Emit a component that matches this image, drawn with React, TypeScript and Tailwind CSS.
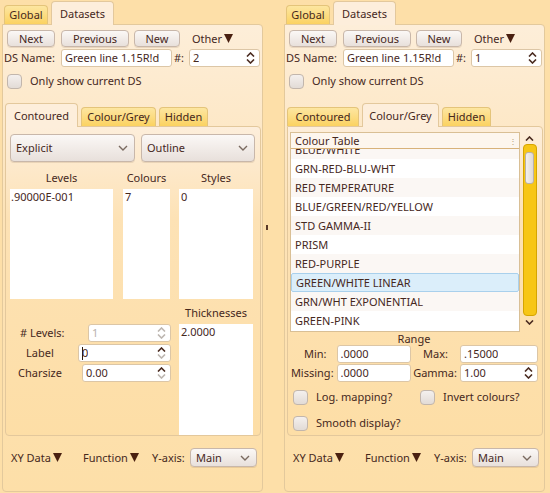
import React from 'react';

const ink = 'text-[#46281d]';

function Tri() {
  return (
    <svg width="9" height="9" viewBox="0 0 9 9" className="ml-[2px] inline-block">
      <polygon points="0,0 9,0 4.5,9" fill="#4a2010" />
    </svg>
  );
}

function Chevron({ up = false, grey = false }: { up?: boolean; grey?: boolean }) {
  return (
    <svg width="9" height="5" viewBox="0 0 9 5">
      <polyline
        points={up ? '1,4.5 4.5,1 8,4.5' : '1,0.5 4.5,4 8,0.5'}
        fill="none"
        stroke={grey ? '#bdb6b0' : '#4a2b20'}
        strokeWidth="1.6"
      />
    </svg>
  );
}

function Spin({ upGrey = false, downGrey = false }: { upGrey?: boolean; downGrey?: boolean }) {
  return (
    <div className="flex flex-col gap-[2px] pr-[4px]">
      <Chevron up grey={upGrey} />
      <Chevron grey={downGrey} />
    </div>
  );
}

function Button({ label, w }: { label: string; w: string }) {
  return (
    <div
      className={`${w} h-[17px] flex items-center justify-center rounded-[4px] border border-[#c8b7aa] bg-gradient-to-b from-[#fbf8f6] to-[#e8e0db] shadow-[0_1px_0_rgba(120,90,60,0.15)]`}
    >
      {label}
    </div>
  );
}

function Combo({ label, w, h }: { label: string; w: string; h: string }) {
  return (
    <div
      className={`${w} ${h} flex items-center justify-between pl-[5px] pr-[6px] rounded-[4px] border border-[#c8b7aa] bg-gradient-to-b from-[#fbf8f6] to-[#e8e0db] shadow-[0_1px_0_rgba(120,90,60,0.15)]`}
    >
      <span>{label}</span>
      <svg width="10" height="6" viewBox="0 0 10 6">
        <polyline points="1,1 5,5 9,1" fill="none" stroke="#7a6a60" strokeWidth="1.4" />
      </svg>
    </div>
  );
}

function Input({ value, w, spin, grey = false, cursor = false }: { value: string; w: string; spin?: React.ReactNode; grey?: boolean; cursor?: boolean }) {
  return (
    <div className={`${w} h-[18px] shrink-0 flex items-center justify-between rounded-[3px] border border-[#dcc6a6] bg-white pl-[3px]`}>
      <span className={`whitespace-nowrap overflow-hidden flex items-center ${grey ? 'text-[#b9b2ac]' : ''}`}>
        {cursor && <span className="w-px h-[13px] bg-[#2a1a10] mr-[-1px]" />}
        {value}
      </span>
      {spin}
    </div>
  );
}

function Check({ label, className = '' }: { label: string; className?: string }) {
  return (
    <div className={`flex items-center gap-[8px] ${className}`}>
      <div className="w-[15px] h-[15px] rounded-[4px] border border-[#c2b6ac] bg-gradient-to-b from-[#f4f0ee] to-[#e2dbd6]" />
      <span>{label}</span>
    </div>
  );
}

function Tab({ label, active, w }: { label: string; active: boolean; w: string }) {
  return active ? (
    <div className={`${w} h-[24px] -mb-px z-10 flex items-center justify-center rounded-t-[4px] border border-b-0 border-[#e3c89c] bg-[#fdeedb]`}>
      {label}
    </div>
  ) : (
    <div className={`${w} h-[19px] flex items-center justify-center rounded-t-[4px] border border-b-0 border-[#e4c47a] bg-gradient-to-b from-[#fde6a0] to-[#fbd260]`}>
      {label}
    </div>
  );
}

const tables = [
  'BLUE/WHITE',
  'GRN-RED-BLU-WHT',
  'RED TEMPERATURE',
  'BLUE/GREEN/RED/YELLOW',
  'STD GAMMA-II',
  'PRISM',
  'RED-PURPLE',
  'GREEN/WHITE LINEAR',
  'GRN/WHT EXPONENTIAL',
  'GREEN-PINK',
];

function Contoured() {
  return (
    <div className="pl-[4px] pt-[7px] h-full flex flex-col">
      <div className="flex gap-[6px]">
        <Combo label="Explicit" w="w-[125px]" h="h-[28px]" />
        <Combo label="Outline" w="w-[114px]" h="h-[28px]" />
      </div>
      <div className="flex mt-[8px] h-[16px] items-center">
        <div className="w-[103px] text-center">Levels</div>
        <div className="w-[47px] ml-[10px] text-center">Colours</div>
        <div className="w-[74px] ml-[9px] text-center">Styles</div>
      </div>
      <div className="flex mt-[3px]">
        <div className="w-[103px] h-[110px] bg-white pl-px leading-[16px]">.90000E-001</div>
        <div className="w-[47px] ml-[10px] h-[110px] bg-white pl-[2px] leading-[16px]">7</div>
        <div className="w-[74px] ml-[9px] h-[110px] bg-white pl-[2px] leading-[16px]">0</div>
      </div>
      <div className="flex flex-1">
        <div className="w-[161px] pt-[25px] flex flex-col gap-[2px]">
          <div className="flex items-center justify-between">
            <span className="ml-[10px]">#&nbsp;Levels:</span>
            <Input value="1" w="w-[83px]" grey spin={<Spin upGrey downGrey />} />
          </div>
          <div className="flex items-center justify-between">
            <span className="ml-[16px]">Label</span>
            <Input value="0" w="w-[93px]" cursor spin={<Spin downGrey />} />
          </div>
          <div className="flex items-center justify-between">
            <span className="ml-[8px]">Charsize</span>
            <Input value="0.00" w="w-[89px]" spin={<Spin downGrey />} />
          </div>
        </div>
        <div className="ml-[8px] flex flex-col">
          <div className="w-[74px] text-center h-[16px] mt-[6px] leading-[16px]">Thicknesses</div>
          <div className="w-[74px] flex-1 mt-[3px] bg-white pl-[2px] leading-[16px]">2.0000</div>
        </div>
      </div>
    </div>
  );
}

function ColourGrey() {
  return (
    <div className="pl-[2px] pt-[5px] pr-[4px] flex flex-col">
      <div className="flex">
        <div className="w-[232px] h-[200px] border border-[#d9bf95] bg-white flex flex-col overflow-hidden">
          <div className="h-[16px] shrink-0 flex items-center justify-between pl-[4px] pr-[2px] border-b border-[#d8b27a] bg-[#fdf6ee] relative z-10">
            <span>Colour Table</span>
            <span className="text-[8px] leading-[8px] text-[#b49a78]">⋮</span>
          </div>
          <div className="-mt-[9px]">
            {tables.map((t, i) => (
              <div
                key={t}
                className={`h-[19px] flex items-center pl-[4px] ${
                  t === 'GREEN/WHITE LINEAR'
                    ? 'bg-[#dbeefa] border border-[#a9d0ec] rounded-[2px] pl-[3px]'
                    : i % 2 === 0
                    ? 'bg-[#fbf7f4]'
                    : 'bg-white'
                }`}
              >
                {t}
              </div>
            ))}
          </div>
        </div>
        <div className="w-[17px] ml-[1px] flex flex-col items-center">
          <div className="h-[12px] flex items-center"><Chevron up /></div>
          <div className="w-[14px] h-[172px] rounded-[4px] border border-[#d5a500] bg-[#f7c615] flex justify-center pt-[7px]">
            <div className="w-[9px] h-[32px] rounded-[3px] border border-[#b9b1aa] bg-gradient-to-r from-[#f3f0ee] to-[#dfd9d5]" />
          </div>
          <div className="h-[12px] flex items-center"><Chevron /></div>
        </div>
      </div>
      <div className="text-center h-[14px] leading-[14px]">Range</div>
      <div className="flex items-center -mt-[1px]">
        <span className="w-[49px] text-right pr-[10px]">Min:</span>
        <Input value=".0000" w="w-[74px]" />
        <span className="w-[52px] text-right pr-[12px]">Max:</span>
        <Input value=".15000" w="w-[78px]" />
      </div>
      <div className="flex items-center mt-[1px]">
        <span className="w-[49px] text-right pr-[3px]">Missing:</span>
        <Input value=".0000" w="w-[74px]" />
        <span className="w-[52px] text-right pr-[3px]">Gamma:</span>
        <Input value="1.00" w="w-[78px]" spin={<Spin />} />
      </div>
      <div className="flex mt-[7px]">
        <Check label="Log. mapping?" className="w-[127px] ml-[3px]" />
        <Check label="Invert colours?" />
      </div>
      <Check label="Smooth display?" className="ml-[3px] mt-[10px]" />
    </div>
  );
}

function Panel({ colour, spin }: { colour: boolean; spin: string }) {
  return (
    <div className="w-[265px] h-full flex flex-col pl-[2px] pr-[2px] pb-[1px]">
      <div className="h-[24px] flex items-end pl-[2px] gap-[3px]">
        <Tab label="Global" active={false} w="w-[44px]" />
        <Tab label="Datasets" active w="w-[63px]" />
      </div>
      <div className="flex-1 border border-[#e3c99c] rounded-b-[4px] rounded-tr-[4px] bg-gradient-to-b from-[#fdeed9] via-[#fde3b8] via-40% to-[#fddfa8] flex flex-col">
        <div className="flex items-center pl-[4px] mt-[5px]">
          <Button label="Next" w="w-[48px]" />
          <Button label="Previous" w="w-[68px] ml-[6px]" />
          <Button label="New" w="w-[46px] ml-[5px]" />
          <span className="ml-[12px] flex items-center">Other<Tri /></span>
        </div>
        <div className="flex items-center mt-[2px] pl-[1px]">
          <span className="w-[57px]">DS Name:</span>
          <Input value="Green line  1.15R!d" w="w-[111px]" />
          <span className="ml-[2px] w-[15px]">#:</span>
          <Input value={spin} w="w-[71px]" spin={<Spin />} />
        </div>
        <Check label="Only show current DS" className="ml-[4px] mt-[6px]" />
        <div className="mt-[13px] ml-[2px] mr-[1px] flex flex-col h-[334px]">
          <div className="h-[24px] flex items-end gap-[3px]">
            <Tab label="Contoured" active={!colour} w={colour ? 'w-[72px]' : 'w-[73px]'} />
            <Tab label="Colour/Grey" active={colour} w={colour ? 'w-[77px]' : 'w-[75px]'} />
            <Tab label="Hidden" active={false} w="w-[49px]" />
          </div>
          <div className="flex-1 border border-[#e3c89c] rounded-b-[4px] rounded-tr-[4px] bg-gradient-to-b from-[#fdeedb] via-[#fde2b5] via-30% to-[#fddea6]">
            {colour ? <ColourGrey /> : <Contoured />}
          </div>
        </div>
        <div className="flex items-center mt-[12px] pl-[8px]">
          <span className="flex items-center w-[64px]">XY Data<Tri /></span>
          <span className="flex items-center ml-[8px] w-[66px]">Function<Tri /></span>
          <span className="ml-[3px] w-[38px]">Y-axis:</span>
          <Combo label="Main" w="w-[67px]" h="h-[19px]" />
        </div>
      </div>
    </div>
  );
}

export default function App() {
  return (
    <div className={`w-[550px] h-[493px] flex bg-[#fddfa8] font-['Noto_Sans',sans-serif] text-[11px] leading-[16px] ${ink}`}>
      <Panel colour={false} spin="2" />
      <div className="w-[17px] flex flex-col items-start pt-[225px]">
        <div className="w-[2px] h-[5px] bg-[#5a3a28] ml-[1px]" />
      </div>
      <Panel colour spin="1" />
    </div>
  );
}
